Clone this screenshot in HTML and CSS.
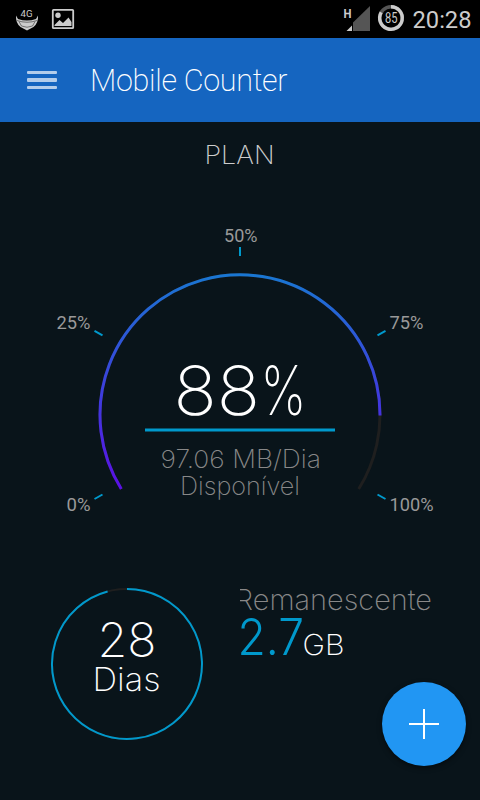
FILE: index.html
```html
<!DOCTYPE html>
<html lang="pt">
<head>
  <meta charset="UTF-8">
  <meta name="viewport" content="width=device-width, initial-scale=1.0">
  <title>Mobile Counter</title>
  <link rel="stylesheet" href="styles.css">
</head>
<body>
  <!-- Status bar -->
  <div class="status-bar">
    <svg class="status-left" width="80" height="38" viewBox="0 0 80 38">
      <path d="M16 15.500 L18 19 Q27 22 36 19 L38 15.500 Q38.500 23 33.500 27 L27 30.500 L20.500 27 Q15.500 23 16 15.500 Z" fill="#ccc"/>
      <path d="M17 20.500 Q27 24 37 20.500 M19 21.500 L21.500 26 Q27 28.500 32.500 26 L35 21.500" fill="none" stroke="#333" stroke-width=".6"/>
      <text x="20.500" y="16.500" class="net-label" textLength="12" lengthAdjust="spacingAndGlyphs">4G</text>
      <rect x="52.800" y="9.800" width="20.400" height="18.400" rx=".8" fill="none" stroke="#ccc" stroke-width="1.800"/>
      <circle cx="58" cy="15.300" r="2.700" fill="#ccc"/>
      <path d="M54.500 26 V25 L59.500 20 L63 23 L68.500 17.500 L71.500 22 V26 Z" fill="#ccc"/>
    </svg>
    <svg class="status-right" width="140" height="38" viewBox="340 0 140 38">
      <text x="343.500" y="17.500" class="signal-label" textLength="8" lengthAdjust="spacingAndGlyphs">H</text>
      <path d="M353 31 V22.500 L370 6 V31 Z" fill="#555"/>
      <path d="M346.500 31 L352 25.500 V31 Z" fill="#ccc"/>
      <circle cx="391" cy="18" r="11.300" fill="none" stroke="#555" stroke-width="3.400"/>
      <path d="M391 6.700 A11.300 11.300 0 1 1 381.200 12.350" fill="none" stroke="#ccc" stroke-width="3.400"/>
      <text x="385" y="23" class="battery-label" textLength="12.500" lengthAdjust="spacingAndGlyphs">85</text>
      <text x="412.500" y="28" class="clock" textLength="59" lengthAdjust="spacingAndGlyphs">20:28</text>
    </svg>
  </div>

  <!-- App bar -->
  <header class="app-bar">
    <div class="menu-icon">
      <span></span>
      <span></span>
      <span></span>
    </div>
    <h1 class="app-title">Mobile Counter</h1>
  </header>

  <main class="content">
    <!-- Usage gauge -->
    <svg class="gauge" width="480" height="448" viewBox="0 122 480 448">
      <defs>
        <linearGradient id="arc" gradientUnits="userSpaceOnUse" x1="0" y1="275" x2="0" y2="490">
          <stop offset="0" stop-color="#1976d2"/>
          <stop offset="1" stop-color="#5b0fe6"/>
        </linearGradient>
      </defs>
      <text x="204.500" y="164" class="display plan" textLength="70" lengthAdjust="spacingAndGlyphs">PLAN</text>

      <path d="M121.300 489 A140 140 0 1 1 358.700 489" class="track"/>
      <path d="M121.300 489 A140 140 0 1 1 380 415.500" class="usage"/>

      <path d="M240 247 V256 M94.500 330.800 L102.500 335.300 M385.500 330.800 L377.500 335.300 M94.500 499 L102.500 494.500 M385.500 499 L377.500 494.500" class="tick"/>
      <text x="224" y="242" class="percent" textLength="33.500" lengthAdjust="spacingAndGlyphs">50%</text>
      <text x="56.500" y="329" class="percent" textLength="34" lengthAdjust="spacingAndGlyphs">25%</text>
      <text x="389.500" y="329" class="percent" textLength="34" lengthAdjust="spacingAndGlyphs">75%</text>
      <text x="66.500" y="511" class="percent" textLength="24" lengthAdjust="spacingAndGlyphs">0%</text>
      <text x="389.500" y="511" class="percent" textLength="44" lengthAdjust="spacingAndGlyphs">100%</text>

      <text x="173.500" y="415" class="display value" textLength="86.500" lengthAdjust="spacingAndGlyphs">88</text>
      <text x="260.500" y="415" class="display value" textLength="46" lengthAdjust="spacingAndGlyphs">%</text>
      <path d="M145 430 H335" class="divider"/>
      <text x="160.500" y="468" class="display note" textLength="160.500" lengthAdjust="spacingAndGlyphs">97.06 MB/Dia</text>
      <text x="180" y="495" class="display note" textLength="120" lengthAdjust="spacingAndGlyphs">Disponível</text>
    </svg>

    <!-- Days left and data left -->
    <div class="summary">
      <svg class="days" width="156" height="156" viewBox="49 586 156 156">
        <circle cx="127" cy="664" r="75" class="days-track"/>
        <path d="M127 589 A75 75 0 1 1 107.600 591.550" class="days-ring"/>
        <text x="97.500" y="657" class="display days-value" textLength="59" lengthAdjust="spacingAndGlyphs">28</text>
        <text x="92.500" y="691" class="display days-label" textLength="68" lengthAdjust="spacingAndGlyphs">Dias</text>
      </svg>
      <svg class="remaining" width="200" height="90" viewBox="239.500 580 200 90">
        <text x="234.500" y="610" class="display remaining-label" textLength="197" lengthAdjust="spacingAndGlyphs">Remanescente</text>
        <text x="237" y="655" class="display remaining-value" textLength="66.500" lengthAdjust="spacingAndGlyphs">2.7</text>
        <text x="302" y="655" class="display remaining-unit" textLength="42" lengthAdjust="spacingAndGlyphs">GB</text>
      </svg>
    </div>
  </main>

  <button class="fab" aria-label="+">
    <svg width="30" height="30" viewBox="0 0 30 30">
      <path d="M15 0 V30 M0 15 H30" stroke="#fff" stroke-width="2"/>
    </svg>
  </button>
</body>
</html>
```
FILE: styles.css
```css
body {
  margin: 0;
  width: 480px;
  height: 800px;
  display: flex;
  flex-direction: column;
  background-color: #09141a;
  font-family: Roboto, sans-serif;
  overflow: hidden;
}

svg {
  display: block;
}

/* Status bar */
.status-bar {
  display: flex;
  justify-content: space-between;
  height: 38px;
  background: #000;
}

.status-bar text {
  fill: #ccc;
}

.net-label {
  font-size: 9.5px;
}

.signal-label {
  font-size: 13px;
  font-weight: 700;
}

.battery-label {
  font-size: 14px;
}

.clock {
  font-size: 24px;
}

/* App bar */
.app-bar {
  display: flex;
  align-items: center;
  height: 84px;
  padding-left: 27px;
  background: #1565c0;
}

.menu-icon {
  display: flex;
  flex-direction: column;
  gap: 4px;
  width: 30px;
  margin-right: 33px;
}

.menu-icon span {
  height: 3.5px;
  border-radius: 1px;
  background: #b3cdeb;
}

.app-title {
  margin: 0;
  font-size: 30.5px;
  font-weight: 200;
  letter-spacing: -0.3px;
  color: #fff;
  white-space: nowrap;
}

/* Gauge */
.display {
  font-family: Inter, Lato, sans-serif;
  font-weight: 200;
}

.plan {
  font-size: 25.5px;
  fill: #ccc;
}

.track,
.usage {
  fill: none;
  stroke-width: 3;
}

.track {
  stroke: #1f1f1f;
}

.usage {
  stroke: url(#arc);
}

.tick {
  stroke: #0099cc;
  stroke-width: 2;
}

.percent {
  font-size: 18px;
  fill: #999;
}

.value {
  font-size: 68px;
  fill: #fff;
}

.divider {
  stroke: #0099cc;
  stroke-width: 3;
}

.note {
  font-size: 25px;
  fill: #888;
}

/* Summary */
.summary {
  display: flex;
  align-items: flex-start;
  padding: 16px 0 0 49px;
}

.days-track,
.days-ring {
  fill: none;
  stroke-width: 2;
}

.days-track {
  stroke: #1f1f1f;
}

.days-ring {
  stroke: #0099cc;
}

.days-value {
  font-size: 47px;
  fill: #fff;
}

.days-label {
  font-size: 33px;
  fill: #fff;
}

.remaining {
  margin: -6px 0 0 34.5px;
  overflow: hidden;
}

.remaining-label {
  font-size: 28px;
  fill: #888;
}

.remaining-value {
  font-size: 50px;
  font-weight: 300;
  fill: #0099cc;
}

.remaining-unit {
  font-size: 29px;
  fill: #fff;
}

/* Floating button */
.fab {
  position: absolute;
  left: 382px;
  top: 682px;
  display: flex;
  align-items: center;
  justify-content: center;
  width: 84px;
  height: 84px;
  padding: 0;
  border: none;
  border-radius: 50%;
  background: #2196f3;
  box-shadow: 0 2px 5px rgba(0, 0, 0, 0.5);
}
```
